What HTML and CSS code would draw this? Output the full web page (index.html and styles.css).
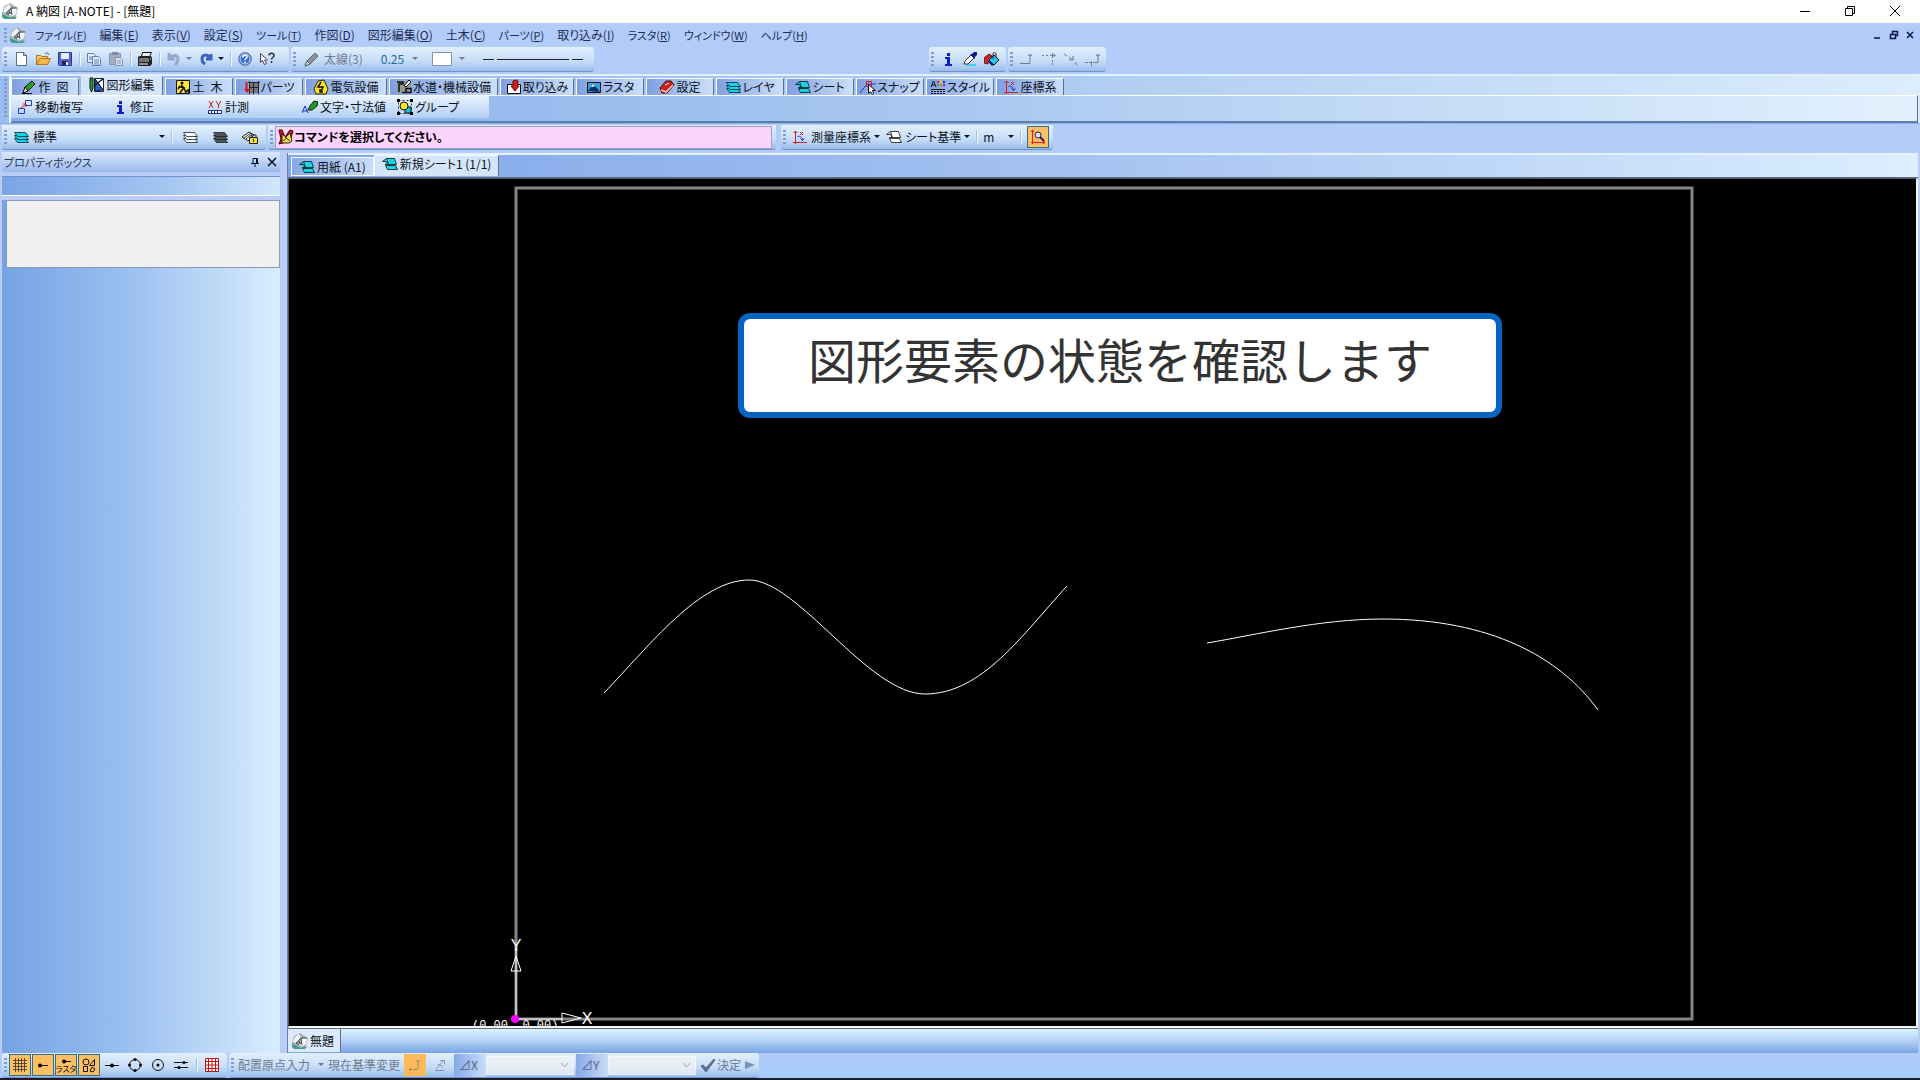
FILE: index.html
```html
<!DOCTYPE html>
<html lang="ja">
  <head>
    <meta charset="UTF-8" />
    <meta name="viewport" content="width=device-width, initial-scale=1.0" />
    <title>A 納図 [A-NOTE] - [無題]</title>
    <link rel="stylesheet" href="styles.css" />
  </head>
  <body>
    <!-- Shared icons -->
    <svg class="sprite" aria-hidden="true">
      <symbol id="i-app" viewBox="0 0 16 16">
        <path d="M0 9l3 1 9 3 3 1-2 2h-11l-2-2z" fill="#3c9c94" />
        <path d="M2 3l6-3 3 2 5 3-2 8-5 2-9-4z" fill="#a9b1b5" />
        <path d="M3 4l4-3 2 4-5 5-3-1z" fill="#eef1f2" />
        <path d="M10 6l5-1-1 6-3 2-4-1z" fill="#f8f9f9" />
        <path d="M4 10l5-5 1 7M9 5l6 0M7 12l-3-2" fill="none" stroke="#454f56" />
        <path d="M6 10l2-2 1 3z" fill="#30393f" />
      </symbol>
      <symbol id="i-layers" viewBox="0 0 16 16">
        <g fill="currentColor" stroke="#123" stroke-width=".8">
          <path d="M1.500 9.500h11l3 4h-11z" />
          <path d="M1.500 6.500h11l3 4h-11z" />
          <path d="M1.500 3.500h11l3 4h-11z" />
        </g>
      </symbol>
      <symbol id="i-sheet" viewBox="0 0 16 16">
        <g fill="currentColor" stroke="#111" stroke-width=".8">
          <path d="M3.500 9.500h10l2 4h-10z" />
          <path d="M4.500 2.500h8l2 6h-8z" />
          <path d="M4.500 2.500l-4 3h4l1.500 3h-3" />
        </g>
      </symbol>
      <symbol id="i-axis" viewBox="0 0 16 16">
        <path d="M3.500 15v-13M1 13.500h14M1.500 4l2-2 2 2" fill="none" stroke="#d21f1f" />
        <path d="M8 3l3 3m0-3l-3 3" stroke="#d21f1f" />
        <path d="M5.500 7.500c3-1 5 1 5 4m-2-2l2 2 2-2" fill="none" stroke="#1a2fd0" />
      </symbol>
      <symbol id="i-pencil" viewBox="0 0 16 16">
        <path d="M2 14l2-6 7-6 3 3-7 7z" fill="#1fa01f" stroke="#111" />
        <path d="M2 14l2-6 3 4z" fill="#f4f4f4" stroke="#111" />
        <path d="M1 14.500h10" stroke="#111" />
      </symbol>
      <symbol id="i-info" viewBox="0 0 16 16">
        <path d="M7 2h3v3h-3zM5 6h5v7h2v2h-7v-2h2v-5h-2z" fill="#0a1fc8" />
      </symbol>
      <symbol id="i-down" viewBox="0 0 6 4">
        <path d="M0 0h6l-3 3z" fill="currentColor" />
      </symbol>
    </svg>

    <div class="window">
      <header class="titlebar">
        <svg class="icon"><use href="#i-app" /></svg>
        <h1 class="titlebar-text">A 納図 [A-NOTE] - [無題]</h1>
        <div class="window-buttons">
          <button type="button" aria-label="最小化">
            <svg viewBox="0 0 12 12"><path d="M1 6.500h10" /></svg>
          </button>
          <button type="button" aria-label="元に戻す">
            <svg viewBox="0 0 12 12"><path d="M1.500 3.500h7v7h-7zM3.500 3.500v-2h7v7h-2" /></svg>
          </button>
          <button type="button" aria-label="閉じる">
            <svg viewBox="0 0 12 12"><path d="M1 1l10 10M11 1l-10 10" /></svg>
          </button>
        </div>
      </header>

      <nav class="menubar">
        <span class="grip"></span>
        <svg class="icon menubar-logo"><use href="#i-app" /></svg>
        <button type="button" class="menu menu-kana">ファイル(<u>F</u>)</button>
        <button type="button" class="menu">編集(<u>E</u>)</button>
        <button type="button" class="menu">表示(<u>V</u>)</button>
        <button type="button" class="menu">設定(<u>S</u>)</button>
        <button type="button" class="menu menu-kana">ツール(<u>T</u>)</button>
        <button type="button" class="menu">作図(<u>D</u>)</button>
        <button type="button" class="menu">図形編集(<u>O</u>)</button>
        <button type="button" class="menu">土木(<u>C</u>)</button>
        <button type="button" class="menu menu-kana">パーツ(<u>P</u>)</button>
        <button type="button" class="menu">取り込み(<u>I</u>)</button>
        <button type="button" class="menu menu-kana">ラスタ(<u>R</u>)</button>
        <button type="button" class="menu menu-kana">ウィンドウ(<u>W</u>)</button>
        <button type="button" class="menu menu-kana">ヘルプ(<u>H</u>)</button>
        <div class="mdi-buttons">
          <button type="button" aria-label="子ウィンドウ最小化">
            <svg viewBox="0 0 10 10"><path d="M1 8h6" /></svg>
          </button>
          <button type="button" aria-label="子ウィンドウを元に戻す">
            <svg viewBox="0 0 10 10"><path d="M1.500 4.500h5v4h-5zM3.500 4v-2.500h5v4h-2" /></svg>
          </button>
          <button type="button" aria-label="子ウィンドウを閉じる">
            <svg viewBox="0 0 10 10"><path d="M2 2l6 6M8 2l-6 6" /></svg>
          </button>
        </div>
      </nav>

      <div class="toolrow">
        <div class="bar bar-standard">
          <span class="grip"></span>
          <button type="button" class="tool" aria-label="新規">
            <svg class="icon" viewBox="0 0 16 16"><path d="M3.500 1.500h7l3 3v10h-10z" fill="#fff" stroke="#5a6b88" /><path d="M10.500 1.500v3h3" fill="none" stroke="#5a6b88" /></svg>
          </button>
          <button type="button" class="tool" aria-label="開く">
            <svg class="icon" viewBox="0 0 16 16"><path d="M1.500 13.500v-9h4l1 1h6v3" fill="#f5cf6e" stroke="#a9791c" /><path d="M1.500 13.500l3-6h11l-3 6z" fill="#fbb64b" stroke="#a9791c" /><path d="M10 3c2-2 3-1 4 1" fill="none" stroke="#555" /></svg>
          </button>
          <button type="button" class="tool" aria-label="保存">
            <svg class="icon" viewBox="0 0 16 16"><path d="M1.500 1.500h13v13h-12l-1-1z" fill="#5863c6" stroke="#2f3a94" /><path d="M4 2h8v6h-8z" fill="#e9edfb" /><path d="M5 10h6v4h-6z" fill="#1f2563" /><path d="M9 11h2v3h-2z" fill="#fff" /></svg>
          </button>
          <span class="sep"></span>
          <button type="button" class="tool" aria-label="コピー">
            <svg class="icon" viewBox="0 0 16 16"><g fill="#e6effc" stroke="#5c7fc0"><path d="M1.500 2.500h6l2 2v7h-8z" /><path d="M6.500 5.500h6l2 2v7h-8z" /></g><path d="M3 6h3M3 8h3M8 9h5M8 11h5M8 13h5" stroke="#5c7fc0" /></svg>
          </button>
          <button type="button" class="tool" aria-label="貼り付け">
            <svg class="icon" viewBox="0 0 16 16"><path d="M1.500 2.500h11v11h-11z" fill="#a3aec4" stroke="#8592ad" /><path d="M4 1h6v3h-6z" fill="#7f8ba6" /><path d="M7.500 6.500h5l2 2v6h-7z" fill="#dbe3f0" stroke="#8592ad" /><path d="M9 10h4M9 12h4" stroke="#8592ad" /></svg>
          </button>
          <span class="sep"></span>
          <button type="button" class="tool" aria-label="印刷">
            <svg class="icon" viewBox="0 0 16 16"><path d="M4.500 5.500l1-4h9l-2 4z" fill="#eee" stroke="#111" /><path d="M1 6l2-1h11l1 2v6l-2 2h-12z" fill="#222" /><path d="M2 8h10M2 10h10" stroke="#c8c8c8" /><path d="M2 13h9" stroke="#fff" /><path d="M13 8h1" stroke="#ff0" /></svg>
          </button>
          <span class="sep"></span>
          <button type="button" class="tool" aria-label="元に戻す" disabled>
            <svg class="icon" viewBox="0 0 16 16"><path d="M3 2v6h6M4 7c3-4 8-3 8 1 0 3-2 4-3 6" fill="none" stroke="#93a9cf" stroke-width="3" /></svg>
            <svg class="arrow arrow-dim"><use href="#i-down" /></svg>
          </button>
          <button type="button" class="tool" aria-label="やり直し">
            <svg class="icon" viewBox="0 0 16 16"><path d="M13 3v5h-5M12 7c-3-4-8-4-8 1 0 3 1 4 3 5" fill="none" stroke="#3d63c4" stroke-width="3" /></svg>
            <svg class="arrow"><use href="#i-down" /></svg>
          </button>
          <span class="sep"></span>
          <button type="button" class="tool" aria-label="ヘルプ">
            <svg class="icon" viewBox="0 0 16 16"><circle cx="8" cy="8" r="6.500" fill="#3c70d0" stroke="#6f87b4" /><circle cx="8" cy="8" r="5" fill="none" stroke="#c5d8fa" /><path d="M6 6.500c0-3 4-3 4-.5 0 1.500-2 1.500-2 3M8 10.500v1.500" fill="none" stroke="#fff" stroke-width="1.500" /></svg>
          </button>
          <button type="button" class="tool" aria-label="状況ヘルプ">
            <svg class="icon" viewBox="0 0 16 16"><path d="M1.500 2.500v9l2-2 2 4 2-1-2-3.500h3z" fill="#fff" stroke="#445" /><path d="M10 4.500c0-3 5-3 5 0 0 2-2.500 2-2.500 4M12.500 10v2" fill="none" stroke="#334" stroke-width="1.500" /></svg>
          </button>
        </div>
        <div class="bar bar-pen">
          <span class="grip"></span>
          <button type="button" class="tool tool-dim">
            <svg class="icon" viewBox="0 0 16 16"><path d="M1 15l2-5 8-8 3 3-8 8z" fill="#8a949c" stroke="#59646c" /><path d="M1 15l2-5 3 3z" fill="#dfe6ea" stroke="#59646c" /></svg>
            太線(3)
          </button>
          <button type="button" class="tool tool-width">0.25 <svg class="arrow arrow-dim"><use href="#i-down" /></svg></button>
          <button type="button" class="tool tool-color" aria-label="色">
            <span class="swatch"></span>
            <svg class="arrow arrow-dim"><use href="#i-down" /></svg>
          </button>
          <button type="button" class="tool" aria-label="線種">
            <svg class="line-sample" viewBox="0 0 100 4"><path d="M0 2.500h11M14 2.500h72M89 2.500h11" stroke="#222" /></svg>
          </button>
        </div>
        <div class="bar bar-pick">
          <span class="grip"></span>
          <button type="button" class="tool" aria-label="情報"><svg class="icon"><use href="#i-info" /></svg></button>
          <button type="button" class="tool" aria-label="スポイト">
            <svg class="icon" viewBox="0 0 16 16"><path d="M5 13h9v2h-10z" fill="#3fd5e6" /><path d="M2 13l1-3 6-6 3 3-6 6z" fill="#fff" stroke="#334" /><path d="M8 3l2 0 2-2 3 0 0 3-2 2 0 2z" fill="#101c8c" /></svg>
          </button>
          <button type="button" class="tool" aria-label="塗りつぶし">
            <svg class="icon" viewBox="0 0 16 16"><path d="M0 12v-5l5-4 3 2-4 3v5z" fill="#d62222" stroke="#701010" /><path d="M5 9l5-5 5 5-5 5z" fill="#2fc4e8" stroke="#111" /><path d="M9 8v-5c0-2 3-2 3 0v3" fill="none" stroke="#222" /><path d="M5 9l5 5-2 1-4-4z" fill="#14249c" /></svg>
          </button>
        </div>
        <div class="bar bar-route">
          <span class="grip"></span>
          <button type="button" class="tool" aria-label="直交" disabled><svg class="icon" viewBox="0 0 16 16"><path d="M1 12.500h10v-9M9 5l2-2 2 2" /></svg></button>
          <button type="button" class="tool" aria-label="水平" disabled><svg class="icon" viewBox="0 0 16 16"><path d="M1 4.500h2m2 0h2m2 0h5M11.500 2v5m0 2v2m0 1v2M13 3l1 1.500-1 1.500" /></svg></button>
          <button type="button" class="tool" aria-label="交点" disabled><svg class="icon" viewBox="0 0 16 16"><path d="M1 3l3 2m2 1l4 3m2 2l2 3M6 9h4v-4" /></svg></button>
          <button type="button" class="tool" aria-label="接続" disabled><svg class="icon" viewBox="0 0 16 16"><path d="M0 11.500h3m1 0h3m1 0h5v-8M11 5l2-2 2 2M6.500 10v5" /></svg></button>
        </div>
      </div>

      <div class="ribbon">
        <span class="grip"></span>
        <div class="ribbon-main">
          <div class="ribbon-tabs">
            <button type="button" class="tab"><svg class="icon"><use href="#i-pencil" /></svg>作&ensp;図</button>
            <button type="button" class="tab tab-mid tab-active">
              <svg class="icon" viewBox="0 0 16 16"><path d="M1 1h3v10l-1.500 4-1.500-4z" fill="#2aa52a" stroke="#111" /><path d="M5.500 1.500h9v13h-9z" fill="#fff" stroke="#224" /><path d="M6 2v12l8-1zM6 2l8 11" stroke="#123" fill="#2b62c8" /><path d="M6 8l8-6" stroke="#111" stroke-width="1.500" /></svg>図形編集
            </button>
            <button type="button" class="tab">
              <svg class="icon" viewBox="0 0 16 16"><path d="M1.500 1.500h13v13h-13z" fill="#ffe33b" stroke="#111" /><circle cx="7" cy="4" r="1.500" /><path d="M6 6l3 3-2 2-2 3M9 9l2 5M5 7l-2 3M5 8l5 1M11 13l2-2 1 3" fill="none" stroke="#111" stroke-width="1.500" /></svg>土&ensp;木
            </button>
            <button type="button" class="tab">
              <svg class="icon" viewBox="0 0 16 16"><path d="M5 3h10v11h-10z" fill="#777" /><path d="M4 3.500h12M5.500 2v13M9.500 3v12M14.500 2v13M5 8.500h10" stroke="#222" /><path d="M2.500 3v8" stroke="#d11" stroke-width="2" /><path d="M0 10h6l-3 4z" fill="#d11" /></svg>パーツ
            </button>
            <button type="button" class="tab tab-mid">
              <svg class="icon" viewBox="0 0 16 16"><path d="M5 2l6-1 4 9-2 5h-10l-2-5z" fill="#ffe11c" stroke="#222" /><path d="M8 3l-3 5h5l-2 5m-1-3v3h3" fill="none" stroke="#111" stroke-width="1.500" /></svg>電気設備
            </button>
            <button type="button" class="tab tab-wide">
              <svg class="icon" viewBox="0 0 16 16"><path d="M1 2h14v12h-14z" fill="#999" /><path d="M1 3h6v2h-4v8M6 13.500h9v-4h-5v4" fill="none" stroke="#111" stroke-width="1.500" /><path d="M8 7l5-6 2 2-5 5z" fill="#fff" stroke="#111" /></svg>水道・機械設備
            </button>
            <button type="button" class="tab tab-import">
              <svg class="icon" viewBox="0 0 16 16"><path d="M1.500 5.500h13v9h-13z" fill="#fff" stroke="#111" /><path d="M7 2c3-2 5 0 5 0l-1 5h2l-4 5-4-5h2z" fill="#d81b1b" stroke="#700" /></svg>取り込み
            </button>
            <button type="button" class="tab">
              <svg class="icon" viewBox="0 0 16 16"><path d="M1.500 3.500h13v10h-13z" fill="#36a3df" stroke="#111" /><path d="M2 12l5-7 3 3 4 5z" fill="#0b2f6d" /><path d="M5 8l2-3 3 3-2-1-1 1z" fill="#fff" /></svg>ラスタ
            </button>
            <button type="button" class="tab">
              <svg class="icon" viewBox="0 0 16 16"><path d="M1 9l6-7 5 0 3 4-7 8-5 0z" fill="#c92020" stroke="#4b0909" /><path d="M2 11l5 2 7-7" fill="none" stroke="#f3cbb8" stroke-width="1.500" /><path d="M6 6l4-2" stroke="#fff" /></svg>設定
            </button>
            <button type="button" class="tab"><svg class="icon cyan"><use href="#i-layers" /></svg>レイヤ</button>
            <button type="button" class="tab"><svg class="icon cyan"><use href="#i-sheet" /></svg>シート</button>
            <button type="button" class="tab">
              <svg class="icon" viewBox="0 0 16 16"><path d="M0 14l7-9h9" fill="none" stroke="#1b39d0" /><path d="M6.500 2.500h5v5h-5z" fill="none" stroke="#e01515" /><path d="M8.500 5.500v9l2-2 2 3 1-1-1-3h3z" fill="#fff" stroke="#111" /></svg>スナップ
            </button>
            <button type="button" class="tab">
              <svg class="icon" viewBox="0 0 16 16"><path d="M1 8l2.500-6 2.500 6M2 6h3M1 10.500h14" fill="none" stroke="#111" /><path d="M7 2h2v2h-2z" fill="#d22" /><path d="M10 2h2v2h-2z" fill="#fc0" /><path d="M13 2h2v2h-2z" fill="#22d" /><path d="M7 5h2v2h-2z" fill="#2a2" /><path d="M10 5h2v2h-2z" fill="#e70" /><path d="M13 5h2v2h-2z" fill="#a2a" /><path d="M1 12.500h14M1 14.500h14" stroke="#111" stroke-dasharray="2 1" /></svg>スタイル
            </button>
            <button type="button" class="tab"><svg class="icon"><use href="#i-axis" /></svg>座標系</button>
          </div>
          <div class="ribbon-body">
            <div class="ribbon-commands">
              <button type="button" class="command">
                <svg class="icon" viewBox="0 0 16 16"><path d="M8.500 1.500h6v5h-6zM1.500 9.500h6v5h-6z" fill="none" stroke="#1f3bd0" /><path d="M4 9l5-4M6 5h3v3" fill="none" stroke="#e01515" /></svg>移動複写
              </button>
              <button type="button" class="command"><svg class="icon"><use href="#i-info" /></svg>修正</button>
              <button type="button" class="command">
                <svg class="icon" viewBox="0 0 16 16"><path d="M2 2l4 7m0-7l-4 7M9 2l2.500 4 2.500-4M11.500 6v3" fill="none" stroke="#d22020" /><path d="M1.500 11.500h13v3h-13zM4.500 12v2M7.500 12v2M10.500 12v2" fill="#fff" stroke="#1a2c9c" /></svg>計測
              </button>
              <button type="button" class="command">
                <svg class="icon" viewBox="0 0 16 16"><path d="M0 14l3-7 3 7M1 12h4" fill="none" stroke="#1a2cd0" /><path d="M6 11l2-4 4-5 4 1-1 4-5 4z" fill="#1fa01f" stroke="#111" /></svg>文字・寸法値
              </button>
              <button type="button" class="command">
                <svg class="icon" viewBox="0 0 16 16"><path d="M1.500 1.500h13v13h-13z" fill="none" stroke="#333" stroke-dasharray="2 2" /><path d="M8 8h6v6h-6z" fill="#16c6e6" stroke="#111" /><circle cx="7" cy="7" r="4" fill="#ffe81c" stroke="#111" /><path d="M0 0h3v3h-3zM13 0h3v3h-3zM0 13h3v3h-3zM13 13h3v3h-3z" /></svg>グループ
              </button>
            </div>
          </div>
        </div>
      </div>

      <div class="toolrow toolrow-command">
        <div class="bar bar-layer">
          <span class="grip"></span>
          <button type="button" class="tool tool-layer">
            <svg class="icon cyan"><use href="#i-layers" /></svg>標準
            <svg class="arrow"><use href="#i-down" /></svg>
          </button>
          <span class="sep"></span>
          <button type="button" class="tool tool-roomy" aria-label="全レイヤ表示"><svg class="icon white"><use href="#i-layers" /></svg></button>
          <button type="button" class="tool tool-roomy" aria-label="レイヤ非表示"><svg class="icon gray"><use href="#i-layers" /></svg></button>
          <button type="button" class="tool tool-roomy" aria-label="レイヤロック">
            <svg class="icon" viewBox="0 0 16 16"><path d="M0 8l7-5 5 3-6 6z" fill="#eee" stroke="#222" /><path d="M2 9l7-5M4 10l6-5" stroke="#444" /><path d="M9 9v-3h5v3" fill="none" stroke="#222" /><path d="M7.500 8.500h8v6h-8z" fill="#ffdf2c" stroke="#222" /><path d="M11.500 10v3" stroke="#222" /></svg>
          </button>
        </div>
        <div class="bar bar-prompt">
          <span class="grip"></span>
          <label class="prompt">
            <svg class="icon" viewBox="0 0 16 16"><path d="M1 1l3 0 3 7 5-7 3 1-3 10-11 3 2-5z" fill="#c21c1c" stroke="#400" /><path d="M4 5l4 3 4-4 2 8-3 2-7 0z" fill="#ffe04a" stroke="#222" /><path d="M7 8l5 4M5 12l4-3" stroke="#222" /></svg>
            <input type="text" class="prompt-text" value="コマンドを選択してください。" aria-label="メッセージ" readonly />
          </label>
        </div>
        <div class="bar bar-coord">
          <span class="grip"></span>
          <button type="button" class="tool"><svg class="icon"><use href="#i-axis" /></svg>測量座標系 <svg class="arrow"><use href="#i-down" /></svg></button>
          <button type="button" class="tool"><svg class="icon white"><use href="#i-sheet" /></svg>シート基準 <svg class="arrow"><use href="#i-down" /></svg></button>
          <span class="sep"></span>
          <button type="button" class="tool tool-unit">m <svg class="arrow"><use href="#i-down" /></svg></button>
          <span class="sep"></span>
          <button type="button" class="toggle toggle-on" aria-label="座標拡大">
            <svg class="icon" viewBox="0 0 16 16"><path d="M2.500 15v-14M1 13.500h14M1 3l1.500-2 1.500 2M13 12l2 1.500-2 1.500" fill="none" stroke="#e02020" /><circle cx="8" cy="6" r="3" fill="#d6e6ff" stroke="#241b6c" /><path d="M10 8l4 4" stroke="#241b6c" stroke-width="2" /></svg>
          </button>
        </div>
      </div>

      <div class="workspace">
        <aside class="panel">
          <div class="panel-header">
            <h2 class="panel-title">プロパティボックス</h2>
            <button type="button" aria-label="固定"><svg viewBox="0 0 10 10"><path d="M3 1.500h4.500v5h-4.500zM6.500 2v4M1 6.500h8M5 7v3" /></svg></button>
            <button type="button" aria-label="閉じる"><svg viewBox="0 0 10 10"><path d="M1 1l8 8M9 1l-8 8" stroke-width="1.500" /></svg></button>
          </div>
          <div class="panel-band"></div>
          <div class="panel-body">
            <div class="panel-box"></div>
          </div>
        </aside>

        <main class="document">
          <div class="sheet-tabs">
            <button type="button" class="sheet"><svg class="icon cyan"><use href="#i-sheet" /></svg>用紙 (A1)</button>
            <button type="button" class="sheet sheet-active"><svg class="icon cyan"><use href="#i-sheet" /></svg>新規シート1 (1/1)</button>
          </div>
          <div class="canvas">
            <svg class="drawing" viewBox="0 0 1626 847" preserveAspectRatio="xMinYMin meet">
              <rect class="paper" x="227" y="9" width="1176" height="831" />
              <!-- Splines -->
              <path class="curve" d="M315 514C361 466 411 401 460 401S579 515 636 515S733 456 778 407" />
              <path class="curve" d="M918 464C966 456 1031 440 1094 440C1201 440 1271 478 1309 531" />
              <!-- Origin marker -->
              <text class="origin-text" x="183" y="850">(0.00, 0.00)</text>
              <path class="axis" d="M227 770v70h46M222 792h10l-5-15zM273 834v10l19-5z" />
              <text class="axis-name" x="227" y="772">Y</text>
              <text class="axis-name" x="298" y="845">X</text>
              <circle cx="226" cy="840" r="4" fill="#f0f" />
            </svg>
            <div class="callout">図形要素の状態を確認します</div>
          </div>
          <div class="file-tabs">
            <button type="button" class="file"><svg class="icon"><use href="#i-app" /></svg>無題</button>
          </div>
        </main>
      </div>

      <footer class="statusbar">
        <div class="bar bar-snap">
          <span class="grip"></span>
          <button type="button" class="toggle toggle-on" aria-label="グリッド"><svg class="icon" viewBox="0 0 16 16"><path d="M1 3.500h14M1 6.500h14M1 9.500h14M1 12.500h14M3.500 1v14M6.500 1v14M9.500 1v14M12.500 1v14" stroke="#222" stroke-width=".7" /></svg></button>
          <button type="button" class="toggle toggle-on" aria-label="端点"><svg class="icon" viewBox="0 0 16 16"><path d="M4 8.500h9" stroke="#111" /><circle cx="5" cy="8.500" r="2" /></svg></button>
          <button type="button" class="toggle toggle-on toggle-stack" aria-label="ラスタスナップ"><svg class="icon-small" viewBox="0 0 16 6"><path d="M5 3.500h8" stroke="#111" /><circle cx="6" cy="3.500" r="2" /></svg><span>ラスタ</span></button>
          <button type="button" class="toggle toggle-on" aria-label="図形"><svg class="icon" viewBox="0 0 16 16"><circle cx="5" cy="5" r="3" fill="none" stroke="#111" /><path d="M2.500 9.500h4v5h-4zM8.500 8.500l5-6v6zM9 14l2-4 3 2-2 3z" fill="none" stroke="#111" /></svg></button>
          <button type="button" class="toggle" aria-label="中点"><svg class="icon" viewBox="0 0 16 16"><path d="M1 8.500h14" stroke="#111" /><circle cx="8" cy="8.500" r="2" /></svg></button>
          <button type="button" class="toggle" aria-label="四半円点"><svg class="icon" viewBox="0 0 16 16"><circle cx="8" cy="8" r="5.500" fill="none" stroke="#111" /><circle cx="8" cy="2.500" r="1.500" /><circle cx="8" cy="13.500" r="1.500" /><circle cx="2.500" cy="8" r="1.500" /><circle cx="13.500" cy="8" r="1.500" /></svg></button>
          <button type="button" class="toggle" aria-label="中心点"><svg class="icon" viewBox="0 0 16 16"><circle cx="8" cy="8" r="5.500" fill="none" stroke="#111" /><circle cx="8" cy="8" r="1.500" /></svg></button>
          <button type="button" class="toggle" aria-label="平行"><svg class="icon" viewBox="0 0 16 16"><path d="M1 5.500h14M1 10.500h14" stroke="#111" /><circle cx="11" cy="5.500" r="1.500" /><circle cx="6" cy="10.500" r="1.500" /></svg></button>
          <span class="sep"></span>
          <button type="button" class="toggle" aria-label="格子"><svg class="icon" viewBox="0 0 16 16"><path d="M1.500 1.500h13v13h-13zM4.500 1v14M8 1v14M11.500 1v14M1 4.500h14M1 8h14M1 11.500h14" fill="#fff" stroke="#c01010" /></svg></button>
        </div>
        <div class="bar bar-input">
          <span class="grip"></span>
          <button type="button" class="tool tool-dim">配置原点入力 <svg class="arrow"><use href="#i-down" /></svg></button>
          <button type="button" class="tool tool-dim">現在基準変更</button>
          <button type="button" class="toggle toggle-flat" aria-label="相対座標"><svg class="icon" viewBox="0 0 16 16"><path d="M2 12.500h3m1 0h5v-9M9 5l2-2 2 2M3.500 11v3" fill="none" stroke="#a08a60" /></svg></button>
          <button type="button" class="toggle" aria-label="極座標"><svg class="icon" viewBox="0 0 16 16"><path d="M2 13.500h9M3 12l8-9M7 3.500h4.500v4M5 7l5 3" fill="none" stroke="#7f92ad" /></svg></button>
          <label class="delta" for="delta-x">⊿X</label>
          <select id="delta-x" class="delta-select" disabled></select>
          <label class="delta" for="delta-y">⊿Y</label>
          <select id="delta-y" class="delta-select" disabled></select>
          <button type="button" class="tool tool-dim tool-decide"><svg class="icon" viewBox="0 0 16 16"><path d="M1 9l2-1 3 3 8-9 1 1-9 12z" fill="#5d7088" stroke="#5d7088" /></svg>決定</button>
          <button type="button" class="tool" aria-label="次へ" disabled><svg class="play" viewBox="0 0 10 8"><path d="M0 0l10 4-10 4z" fill="#7b93b8" /></svg></button>
        </div>
      </footer>
    </div>
  </body>
</html>
```

FILE: styles.css
```css
* {
  box-sizing: border-box;
}
body {
  margin: 0;
  font-family: "Noto Sans CJK JP", "Noto Sans", sans-serif;
  font-size: 12px;
  line-height: 16px;
  font-feature-settings: "palt";
  color: #0b1220;
  background: #1b1b2a;
}
h1,
h2 {
  margin: 0;
  font-size: 12px;
  font-weight: 400;
}
button {
  display: flex;
  align-items: center;
  padding: 0;
  border: none;
  background: none;
  font: inherit;
  font-feature-settings: inherit;
  color: inherit;
  white-space: nowrap;
}
svg {
  display: block;
  flex: none;
}
.sprite {
  position: absolute;
  width: 0;
  height: 0;
}
.icon {
  width: 16px;
  height: 16px;
}
.cyan {
  color: #14d4e8;
}
.white {
  color: #fff;
}
.gray {
  color: #555;
}
.arrow {
  width: 6px;
  height: 4px;
}
.arrow-dim {
  color: #6b7d99;
}
.window {
  display: flex;
  flex-direction: column;
  height: 100vh;
  padding-bottom: 2px;
}

/* Title bar */
.titlebar {
  display: flex;
  align-items: center;
  height: 23px;
  padding: 0 19px 1px 2px;
  gap: 8px;
  background: #fff;
  color: #000;
}
.titlebar-text {
  flex: 1;
}
.window-buttons {
  display: flex;
  gap: 33px;
}
.window-buttons svg {
  width: 12px;
  height: 12px;
  fill: none;
  stroke: #000;
}

/* Menu bar */
.menubar {
  display: flex;
  align-items: center;
  height: 23px;
  padding: 0 5px 0 4px;
  gap: 13px;
  background: #b3cbf8;
  color: #1a2d55;
}
.menubar .grip {
  margin-right: -10px;
}
.menubar-logo {
  margin-right: -4px;
}
.menu-kana {
  font-size: 11px;
}
.mdi-buttons {
  display: flex;
  gap: 6px;
  margin-left: auto;
}
.mdi-buttons svg {
  width: 10px;
  height: 10px;
  fill: none;
  stroke: #0b1550;
  stroke-width: 1.5;
}
.grip {
  flex: none;
  width: 3px;
  height: 14px;
  background: repeating-linear-gradient(#7f9ccb 0 2px, transparent 2px 4px);
}
.sep {
  flex: none;
  width: 1px;
  height: 14px;
  background: #a3bfe6;
  box-shadow: 1px 0 0 #f2f8ff;
}

/* Tool bars */
.toolrow {
  display: flex;
  align-items: flex-start;
  height: 28px;
  padding: 1px 2px;
  gap: 2px;
  background: #b3cbf8;
}
.bar {
  display: flex;
  align-items: center;
  height: 25px;
  padding: 0 4px 0 2px;
  border-bottom: 1px solid #6d92c9;
  border-radius: 3px;
  background: linear-gradient(#e2effc, #c5dcf7 60%, #9bbdeb);
}
.tool {
  gap: 4px;
}
.tool-dim {
  color: #6b7a92;
}
.bar-standard {
  width: 287px;
  gap: 6px;
}
.bar-pen {
  width: 303px;
  gap: 18px;
}
.bar-pen .grip {
  margin-right: -10px;
}
.tool-width {
  gap: 8px;
  color: #1e6a9e;
}
.tool-color {
  margin-left: -4px;
  gap: 7px;
}
.swatch {
  width: 20px;
  height: 14px;
  border: 1px solid #8295ad;
  background: #fff;
}
.line-sample {
  width: 100px;
  height: 4px;
}
.bar-pick {
  margin-left: 333px;
  width: 77px;
  gap: 6px;
}
.bar-route {
  width: 98px;
  gap: 6px;
}
.bar-route path {
  fill: none;
  stroke: #6c7c92;
}

/* Ribbon */
.ribbon {
  display: flex;
  height: 50px;
  padding-right: 2px;
  gap: 2px;
  border-top: 2px solid #e0f1fd;
  background: linear-gradient(90deg, #9abcf0, #a9c8f0 50%, #dceefc);
  border-bottom: 1px solid #8fb0e0;
}
.ribbon > .grip {
  height: 40px;
  margin: 3px 0 0 4px;
}
.ribbon-main {
  flex: 1;
  display: flex;
  flex-direction: column;
  border-left: 2px solid #f2f9ff;
}
.ribbon-tabs {
  display: flex;
  align-items: flex-end;
  height: 19px;
  gap: 2px;
}
.tab {
  justify-content: center;
  width: 68px;
  height: 17px;
  gap: 1px;
  border: 1px solid #f2f9ff;
  border-right: 1px solid #5d7089;
  border-bottom: none;
  background: linear-gradient(90deg, #7f9fe0, #ccdffa);
}
.tab-mid {
  width: 82px;
}
.tab-wide {
  width: 109px;
}
.tab-import {
  width: 74px;
}
.tab-active {
  height: 19px;
  padding-bottom: 2px;
  border-color: #dceafb #5d7089 transparent #dceafb;
  background: #d4e5fa;
}
.ribbon-body {
  flex: 1;
  border-top: 1px solid #fff;
  border-right: 1px solid #5d7089;
  border-bottom: 2px solid #5d7eb0;
  background: linear-gradient(90deg, #84aeea, #a9c8f0 50%, #e2f1fd);
}
.ribbon-commands {
  display: grid;
  grid-template-columns: repeat(5, 95px);
  align-items: center;
  width: 478px;
  height: 22px;
  padding-left: 6px;
  background: linear-gradient(#e8f2fd, #b3cff5);
}
.command {
  gap: 2px;
}

/* Command line */
.toolrow-command .bar {
  border-radius: 0 0 3px 3px;
}
.bar-layer {
  width: 264px;
  gap: 6px;
}
.tool-layer {
  flex: 1;
}
.tool-layer .arrow {
  margin-left: auto;
}
.tool-roomy {
  padding: 0 4px;
}
.bar-prompt {
  width: 508px;
  gap: 2px;
}
.prompt {
  flex: 1;
  display: flex;
  align-items: center;
  height: 23px;
  padding-left: 2px;
  border: 1px solid #9a9fc4;
  background: #fcd3fb;
}
.prompt-text {
  flex: 1;
  min-width: 0;
  padding: 0;
  border: none;
  background: none;
  font: inherit;
  font-size: 12px;
  font-weight: 700;
  font-feature-settings: inherit;
}
.bar-coord {
  gap: 6px;
  margin-left: 3px;
}
.bar-coord .tool {
  gap: 3px;
}
.bar-coord .tool-unit {
  gap: 14px;
}
.toggle {
  justify-content: center;
  width: 22px;
  height: 22px;
}
.toggle-on {
  border: 1px solid #2f6f86;
  background: #fdbf62;
}
.toggle-flat {
  background: #fdb95a;
}

/* Property panel */
.workspace {
  flex: 1;
  display: flex;
  min-height: 0;
  padding-right: 2px;
  gap: 6px;
  background: #b9cdf8;
}
.panel {
  display: flex;
  flex-direction: column;
  width: 281px;
  padding: 0 1px 0 2px;
}
.panel-header {
  display: flex;
  align-items: center;
  height: 20px;
  padding: 0 3px 0 2px;
  gap: 7px;
  background: linear-gradient(#d9e9fc, #9bb9ee);
}
.panel-title {
  flex: 1;
  font-size: 11px;
  color: #2a3550;
}
.panel-header svg {
  width: 10px;
  height: 10px;
  fill: none;
  stroke: #0a1024;
}
.panel-band {
  height: 20px;
  margin: 4px 0;
  border-top: 1px solid #6f93cf;
  border-bottom: 1px solid #fff;
  background: linear-gradient(90deg, #7ba4e5, #a5c6f1 60%, #d3e7fb);
}
.panel-body {
  flex: 1;
  padding-left: 4px;
  background: linear-gradient(90deg, #76a2e4, #9fc3f1 50%, #d9edfd);
}
.panel-box {
  height: 68px;
  border: 1px solid #8b9ab5;
  background: #f0f0f0;
}

/* Drawing area */
.document {
  flex: 1;
  display: flex;
  flex-direction: column;
  min-width: 0;
  margin-top: 1px;
  border-left: 1px solid #6c7f9e;
}
.sheet-tabs {
  display: flex;
  align-items: flex-start;
  height: 25px;
  padding: 0 3px;
  border-top: 2px solid #e2f3fe;
  border-bottom: 1px solid #5f6d80;
  background: linear-gradient(90deg, #82a8ea, #a6c3f1 50%, #dcefff);
}
.sheet {
  height: 19px;
  margin-top: 2px;
  padding: 0 7px;
  gap: 2px;
  border: 1px solid #f2f9ff;
  background: linear-gradient(90deg, #88a9e6, #c9dcf9);
}
.sheet-active {
  height: 21px;
  margin-top: 0;
  padding: 0 7px 4px;
  border-right-color: #5d7089;
  border-bottom: none;
  background: #d4e5fa;
}
.canvas {
  position: relative;
  flex: 1;
  min-height: 0;
  overflow: hidden;
  border: 1px solid #4d5866;
  border-right: 2px solid #f4f8fc;
  border-bottom: 2px solid #f4f8fc;
  background: #000;
}
.drawing {
  width: 100%;
  height: 100%;
}
.paper {
  fill: none;
  stroke: #858585;
  stroke-width: 3;
}
.curve {
  fill: none;
  stroke: #fff;
  stroke-width: 1;
}
.axis {
  fill: none;
  stroke: #fff;
}
.axis-name {
  fill: #fff;
  font-family: "Liberation Sans", sans-serif;
  font-size: 16px;
  text-anchor: middle;
}
.origin-text {
  fill: #fff;
  font-family: "Liberation Mono", monospace;
  font-size: 12px;
}
.callout {
  position: absolute;
  top: 134px;
  left: 449px;
  height: 105px;
  padding: 3px 64px;
  border: 6px solid #0563c1;
  border-radius: 12px;
  background: #fff;
  color: #333;
  font-size: 48px;
  line-height: 72px;
  font-feature-settings: normal;
  white-space: nowrap;
}
.file-tabs {
  height: 25px;
  border-top: 1px solid #5f6d80;
  background: linear-gradient(#def1fd, #b3d1f5 50%, #78a4e6);
}
.file {
  height: 23px;
  padding: 0 6px 0 4px;
  gap: 2px;
  border-right: 1px solid #5d7089;
  background: #dceafb;
}

/* Status bar */
.statusbar {
  display: flex;
  height: 25px;
  padding-left: 2px;
  gap: 2px;
  background: linear-gradient(#b3cbf8, #a4ccfb);
}
.bar-snap {
  width: 225px;
  gap: 1px;
}
.bar-snap .grip {
  margin-right: 1px;
}
.bar-snap .sep {
  margin: 0 3px;
}
.toggle-stack {
  flex-direction: column;
  font-size: 8px;
  line-height: 9px;
}
.icon-small {
  width: 16px;
  height: 6px;
}
.bar-input {
  gap: 4px;
}
.bar-input .tool {
  gap: 8px;
}
.bar-input .tool-decide {
  gap: 1px;
}
.delta {
  width: 32px;
  height: 23px;
  margin-left: -2px;
  padding: 3px 5px;
  background: linear-gradient(90deg, #86a9e8, #c9dcf9);
  color: #52627d;
}
.delta-select {
  width: 88px;
  height: 19px;
  margin-left: -4px;
  border: 1px solid #fff;
  border-radius: 0;
  appearance: none;
  background: #f4f4f4
    url("data:image/svg+xml,%3Csvg xmlns='http://www.w3.org/2000/svg' width='9' height='6'%3E%3Cpath d='M1 1l3.500 4 3.500-4' fill='none' stroke='%23889'/%3E%3C/svg%3E")
    no-repeat right 4px center;
}
.play {
  width: 10px;
  height: 8px;
}
```
